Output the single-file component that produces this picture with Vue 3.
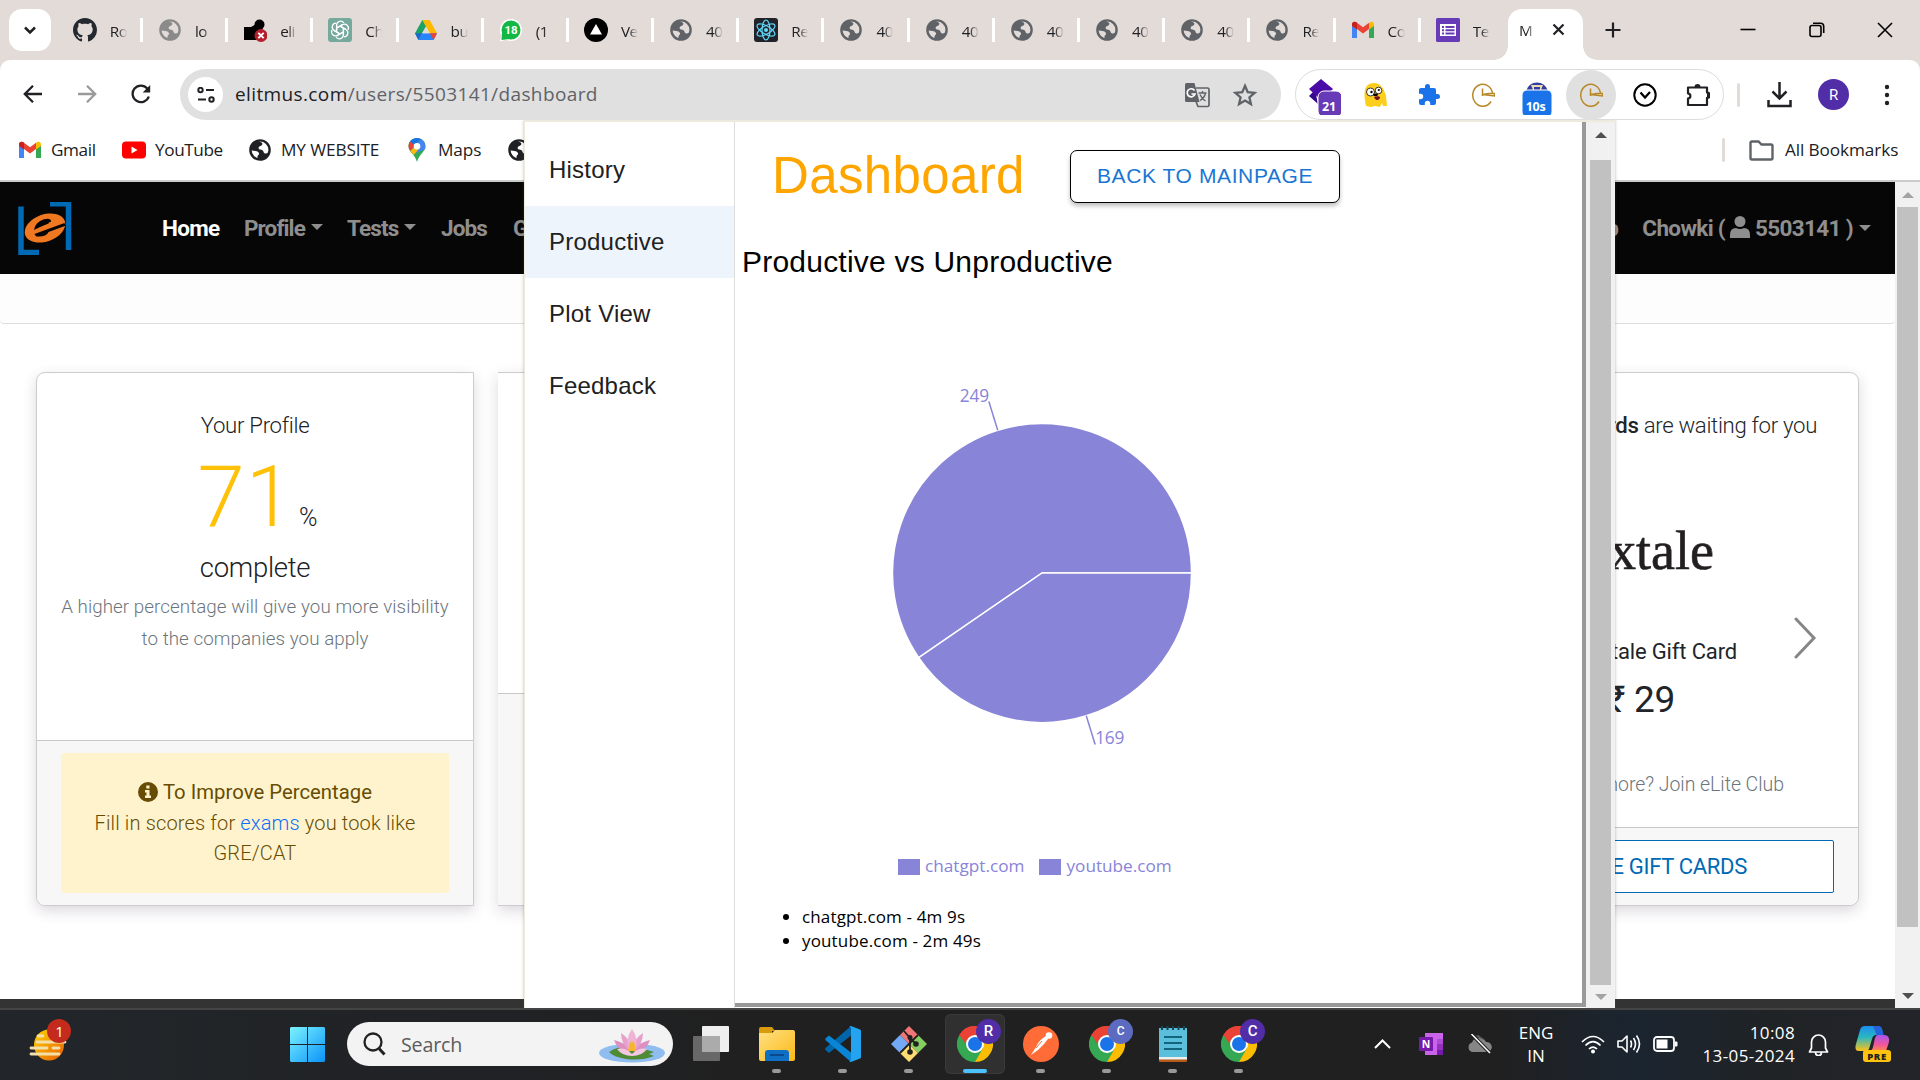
<script setup>
const tabs = [
  { icon: 'github', text: 'Ro' },
  { icon: 'globe', text: 'lo', color: '#8a8a8a' },
  { icon: 'thumb', text: 'eli' },
  { icon: 'gpt', text: 'Ch' },
  { icon: 'drive', text: 'bu' },
  { icon: 'whatsapp', text: '(1' },
  { icon: 'vercel', text: 'Ve' },
  { icon: 'globe', text: '40' },
  { icon: 'react', text: 'Re' },
  { icon: 'globe', text: '40' },
  { icon: 'globe', text: '40' },
  { icon: 'globe', text: '40' },
  { icon: 'globe', text: '40' },
  { icon: 'globe', text: '40' },
  { icon: 'globe', text: 'Re' },
  { icon: 'gmail', text: 'Co' },
  { icon: 'forms', text: 'Te' },
]
const extensions = ['diamond', 'jake', 'puzzle', 'clock', 'timer', 'clock', 'check', 'ext']
const menu = ['History', 'Productive', 'Plot View', 'Feedback']
const apps = [
  { icon: 'explorer' },
  { icon: 'vscode' },
  { icon: 'git' },
  { icon: 'chrome', badge: 'R', color: '#512da8', active: true },
  { icon: 'postman' },
  { icon: 'chrome', badge: 'C', color: '#5c6bc0', small: true },
  { icon: 'notepad' },
  { icon: 'chrome', badge: 'C', color: '#512da8' },
]

const cx = 307, cy = 310, r = 149.5
const sites = [{ name: 'chatgpt.com', value: 249, time: '4m 9s' }, { name: 'youtube.com', value: 169, time: '2m 49s' }]
const total = sites.reduce((sum, s) => sum + s.value, 0)
const at = (angle, radius) => [cx + radius * Math.cos(angle), cy - radius * Math.sin(angle)]
let start = 0
const slices = sites.map((s) => {
  const end = start + (s.value / total) * Math.PI * 2
  const mid = (start + end) / 2
  const slice = {
    value: s.value,
    d: `M${cx} ${cy}L${at(start, r)}A${r} ${r} 0 ${end - start > Math.PI ? 1 : 0} 0 ${at(end, r)}Z`,
    from: at(mid, r),
    to: at(mid, r + 30),
    anchor: Math.cos(mid) < 0 ? 'end' : 'start',
  }
  start = end
  return slice
})
</script>

<template>
  <div class="screen">
    <svg class="sprite" width="0" height="0">
      <defs>
        <linearGradient id="gwin" x1="0" y1="0" x2="1" y2="1"><stop offset="0" stop-color="#7cf3ff" /><stop offset="1" stop-color="#0a93f8" /></linearGradient>
        <linearGradient id="gsun" x1="0" y1="0" x2="1" y2="1"><stop offset="0" stop-color="#ffd500" /><stop offset="1" stop-color="#e85d04" /></linearGradient>
        <linearGradient id="gfold" x1="0" y1="0" x2="1" y2="1"><stop offset="0" stop-color="#ffe184" /><stop offset="1" stop-color="#fbb916" /></linearGradient>
        <linearGradient id="gcop" x1="0" y1="0" x2="0" y2="1"><stop offset="0" stop-color="#1b8df0" /><stop offset=".45" stop-color="#2bb7c0" /><stop offset="1" stop-color="#ffc21a" /></linearGradient>
        <linearGradient id="gcop2" x1="0" y1="0" x2="0" y2="1"><stop offset="0" stop-color="#a855f0" /><stop offset=".6" stop-color="#f0569a" /><stop offset="1" stop-color="#ff8a4c" /></linearGradient>
      </defs>
      <symbol id="globe" viewBox="0 0 24 24"><circle cx="12" cy="12" r="9.6" fill="none" stroke="currentColor" stroke-width="2.4" /><path d="M10 2.5C5 4 2 8 2 12.3l5.5.7c1.6.2 3.6 1.2 3.6 2.8 0 1.2-1.6 1.5-1.6 2.7v3.3C15 22.500 20.500 20 21.800 13.500l-3.500 2c-1.400.4-2.500-.5-2.800-1.700-.3-1.400-1.600-2.200-3.200-2.300-1.700-.2-2.100-1.600-1.300-2.800l2.300-1.300c1.300-.6 1.500-1.600.3-2.800z" fill="currentColor" /></symbol>
      <symbol id="github" viewBox="0 0 16 16"><path fill="#24292f" d="M8 0C3.580 0 0 3.580 0 8c0 3.540 2.290 6.530 5.470 7.590.4.070.55-.17.55-.38 0-.19-.01-.82-.01-1.490-2.010.37-2.530-.49-2.690-.94-.09-.23-.48-.94-.82-1.130-.28-.15-.68-.52-.01-.53.63-.01 1.080.58 1.230.82.72 1.210 1.870.87 2.330.66.07-.52.28-.87.51-1.070-1.780-.2-3.640-.89-3.640-3.950 0-.87.31-1.590.82-2.150-.08-.2-.36-1.020.08-2.120 0 0 .67-.21 2.200.82.64-.18 1.320-.27 2-.27s1.360.09 2 .27c1.530-1.040 2.200-.82 2.200-.82.44 1.100.16 1.920.08 2.120.51.56.82 1.270.82 2.150 0 3.070-1.870 3.750-3.650 3.950.29.25.54.73.54 1.480 0 1.070-.01 1.930-.01 2.200 0 .21.15.46.55.38A8.013 8.013 0 0016 8c0-4.420-3.580-8-8-8z" /></symbol>
      <symbol id="thumb" viewBox="0 0 24 24"><circle cx="16.500" cy="6.500" r="5" /><path d="M1 9h7l7-4 5 5-7 12H1z" /><circle cx="18" cy="17.500" r="6.500" fill="#b3202c" /><path d="M15.300 14.800l5.400 5.400m0-5.400l-5.400 5.400" stroke="#fff" stroke-width="1.900" /></symbol>
      <symbol id="gpt" viewBox="0 0 24 24"><rect width="24" height="24" rx="3" fill="#75a99c" /><g fill="none" stroke="#fff" stroke-width="1.300"><path v-for="n in 6" :key="n" d="M8.600 13.800V7.200a4 4 0 017.300-2.200M8.600 10l5.800-3.300" :transform="`rotate(${n * 60} 12 12)`" /></g></symbol>
      <symbol id="drive" viewBox="0 0 24 24"><path d="M8.300 2h7.400L8 15.300 4.500 22 1 15.300z" fill="#1ea362" /><path d="M8.300 2h7.400L23 15.300h-7.300z" fill="#ffba00" /><path d="M4.500 22L8.200 15.300H23L19.500 22z" fill="#2684fc" /><path d="M1 15.300h7.200L4.500 22z" fill="#1967d2" /><path d="M15.700 15.300H23L19.500 22z" fill="#ea4335" /><path d="M12 8.800l3.700 6.500H8.300z" fill="#e3dbd8" /></symbol>
      <symbol id="whatsapp" viewBox="0 0 24 24"><path d="M12 1a11 11 0 11-5 20.800L1 23.500l1.300-6A11 11 0 0112 1z" fill="#fff" /><circle cx="12" cy="12" r="9.500" fill="#12b843" /><path d="M3 14l-.5 8 8-1z" fill="#12b843" /><text x="12" y="16.300" font-size="11.500" font-weight="700" fill="#fff" text-anchor="middle" font-family="Roboto, sans-serif">18</text></symbol>
      <symbol id="vercel" viewBox="0 0 24 24"><circle cx="12" cy="12" r="12" /><path d="M12 6l6 10.500H6z" fill="#fff" /></symbol>
      <symbol id="react" viewBox="0 0 24 24"><rect width="24" height="24" rx="3" fill="#20232a" /><circle cx="12" cy="12" r="2" fill="#61dafb" /><g fill="none" stroke="#61dafb" stroke-width="1.200"><ellipse v-for="n in 3" :key="n" cx="12" cy="12" rx="10" ry="4" :transform="`rotate(${n * 60 + 30} 12 12)`" /></g></symbol>
      <symbol id="gmail" viewBox="0 0 24 24"><path d="M1 6.500V20h5v-9z" fill="#4285f4" /><path d="M23 6.500V20h-5v-9z" fill="#34a853" /><path d="M1 6.500C1 3.500 4 3 6 4.800l6 4.500 6-4.500V11l-6 4.600L6 11l-5-3z" fill="#ea4335" /><path d="M18 4.800c2-1.800 5-1.300 5 1.700V8l-5 3.500z" fill="#fbbc04" /><path d="M1 6.500C1 3.500 4 3 6 4.800v6.700L1 8z" fill="#c5221f" /></symbol>
      <symbol id="forms" viewBox="0 0 24 24"><rect width="24" height="24" rx="1.500" fill="#673ab7" /><rect x="4" y="6" width="16" height="12" fill="#fff" /><path d="M6 8h2v2H6zm3.500 0h9v2h-9zM6 11.200h2v2H6zm3.500 0h9v2h-9zM6 14.400h2v2H6zm3.500 0h9v2h-9z" fill="#673ab7" /></symbol>
      <symbol id="youtube" viewBox="0 0 24 24"><rect y="3.500" width="24" height="17" rx="4" fill="#f00" /><path d="M9.500 8.500v7l6-3.500z" fill="#fff" /></symbol>
      <symbol id="maps" viewBox="0 0 24 24"><path d="M12 0c5 0 8.500 3.600 8.500 8.300C20.500 14 14 16 12 24 10 16 3.500 14 3.500 8.300 3.500 3.600 7 0 12 0z" fill="#34a853" /><path d="M12 0c-3 0-5.500 1.300-7 3.500l4.500 3.800L16 .9C14.800.3 13.500 0 12 0z" fill="#1a73e8" /><path d="M5 3.500C3 6.500 3 10 5.300 13l9.500-11.500L9.500 7.300z" fill="#ea4335" /><path d="M5.300 13l2.700 3.300 12-5C21 7 19.500 3 16 .9z" fill="#4285f4" /><path d="M5.300 13l3.400 4L18 6l-4.500 4.500-3-2.500z" fill="#fbbc04" /><circle cx="12" cy="8.300" r="3.300" fill="#fff" /></symbol>
      <symbol id="diamond" viewBox="0 0 36 40"><path d="M10 15l-6 6 9 8z" fill="#35088c" /><path d="M16 4l12 10-12 11L4 14z" fill="#4a0aa8" /><rect x="13" y="16" width="24" height="26" rx="6" fill="#673ab7" stroke="#fff" stroke-width="1" /></symbol>
      <symbol id="jake" viewBox="0 0 24 24"><path d="M3 23c-2-9-4-23 8-23 7 0 10 6 12 13l1 10h-4l-1-3-2 4-5-1-4 1z" fill="#fccf1c" /><circle cx="7.500" cy="9" r="4" fill="#fff" stroke="#222" stroke-width=".9" /><circle cx="15.500" cy="7.500" r="3.300" fill="#fff" stroke="#222" stroke-width=".9" /><circle cx="8.500" cy="9" r="1.200" /><circle cx="15.800" cy="7" r="1.100" /><ellipse cx="12.500" cy="11.800" rx="2.500" ry="1.400" /><path d="M11 14c2-1 5-1 6 0 0 3-4 5-6 0z" fill="#712" /></symbol>
      <symbol id="puzzle" viewBox="0 0 24 24"><path d="M20.500 11H19V7a2 2 0 00-2-2h-4V3.500a2.500 2.500 0 00-5 0V5H4a2 2 0 00-2 2v3.800h1.500a2.700 2.700 0 010 5.400H2V20a2 2 0 002 2h3.800v-1.500a2.700 2.700 0 015.400 0V22H17a2 2 0 002-2v-4h1.500a2.500 2.500 0 000-5z" fill="#1a73e8" /></symbol>
      <symbol id="clock" viewBox="0 0 24 24"><path d="M21.500 10A10 11 0 1020 18.500M11.500 5.500V13M11.500 11.500L18 10.500h5.500v2.500z" fill="none" stroke="#b8892b" stroke-width="1.500" /></symbol>
      <symbol id="timer" viewBox="0 0 36 40"><path d="M7 16a11.500 12 0 0122 0z" fill="#303f9f" /><path d="M12 10h12l-2 5h-8z" fill="#ecd9b5" /><path d="M15 12h6v4h-6z" fill="#303f9f" /><rect x="3" y="15" width="30" height="27" rx="5" fill="#1a73e8" stroke="#fff" /></symbol>
      <symbol id="check" viewBox="0 0 24 24"><circle cx="12" cy="12" r="10.700" fill="none" stroke="#000" stroke-width="2" /><path d="M7.500 9.500l4.500 5 5-5.500" fill="none" stroke="#000" stroke-width="2.200" /></symbol>
      <symbol id="ext" viewBox="0 0 24 24"><path d="M2 4.500h19V9.500a2.700 2.700 0 010 5.400V22H2v-6.500c3.200-.5 3.200-4.700 0-5.200z" fill="none" stroke="#202124" stroke-width="2.200" stroke-linejoin="round" /><path d="M8.500 4a3 3 0 016 0zM21 9.200a3 3 0 010 6z" fill="#202124" /></symbol>
      <symbol id="explorer" viewBox="0 0 36 36"><path d="M0 3q0-2 2-2h11l3 4h-3v8H0z" fill="#d99a0b" /><path d="M0 7h13l3-3h18q2 0 2 2v27q0 2-2 2H2q-2 0-2-2z" fill="url(#gfold)" /><path d="M6 35V27q0-3 3-3h18q3 0 3 3v8z" fill="#0f6fc5" /><path d="M11 29h14" stroke="#0a3e78" stroke-width="1.500" /></symbol>
      <symbol id="vscode" viewBox="0 0 36 36"><path d="M26 0v9.500L4 27l-3.500-3q-.8-1 0-2z" fill="#0065a9" /><path d="M26 36v-9.500L4 9.500.7 12.300q-.9 1 0 2z" fill="#0a84d4" /><path d="M26 0l9 3.500q1 .5 1 1.500v26q0 1-1 1.500L26 36q-1 0-1.800-1 1.800.5 1.800-1.500v-31Q26 .5 24.200 1q.8-1 1.800-1z" fill="#24a3f1" /></symbol>
      <symbol id="git" viewBox="0 0 36 36"><path d="M18 0l9 9-9 9-9-9z" fill="#f27474" /><path d="M27 9l9 9-9 9-9-9z" fill="#87ce62" /><path d="M9 9l9 9-9 9-9-9z" fill="#74a9f5" /><path d="M18 18l9 9-9 9-9-9z" fill="#ffdc72" /><path d="M13 5l6 7v14M19 12l6 6M9 27L27 9" stroke="#202020" stroke-width="1.800" fill="none" /><circle cx="19" cy="11.500" r="2.500" fill="#202020" /><circle cx="19" cy="26" r="2.800" fill="#202020" /><circle cx="25" cy="18" r="2.800" fill="#202020" /></symbol>
      <symbol id="chrome" viewBox="0 0 36 36"><path d="M18 18L2.400 9A18 18 0 0133.600 9z" fill="#ea4335" /><path d="M18 18H18L33.600 9A18 18 0 0118 36z" fill="#fbbc04" /><path d="M18 18V18L18 36A18 18 0 012.400 9z" fill="#34a853" /><path d="M18 9h15.600L25.800 22.500z" fill="#fbbc04" /><path d="M10.200 22.500L2.400 9 18 9z" fill="#34a853" /><path d="M2.400 9A18 18 0 0133.600 9H18l-7.800 4.500-2 4z" fill="#ea4335" /><path d="M25.800 22.500L18 36l-2-9z" fill="#34a853" /><circle cx="18" cy="18" r="9" fill="#fff" /><circle cx="18" cy="18" r="7" fill="#1a73e8" /></symbol>
      <symbol id="postman" viewBox="0 0 36 36"><circle cx="18" cy="18" r="18" fill="#ff6c37" /><path d="M23 10q-7 4-10 11l-5 8 7-5 6-6 4-5z" fill="#fff" /><circle cx="26" cy="9.500" r="3.300" fill="#fff" /><path d="M22 18l-5 8m-4-4l6-7" stroke="#ff6c37" stroke-width="1" /></symbol>
      <symbol id="notepad" viewBox="0 0 36 36"><path d="M4 2h28v30H4z" fill="#5bbfdc" /><path d="M4 31h28v3H4z" fill="#eee" /><path d="M4 33.500h28V35q0 1-1 1H5q-1 0-1-1z" fill="#b35a18" /><path d="M9 11h18M9 17h18M9 23h18" stroke="#13657d" stroke-width="2.200" /><path d="M7 0v4m5.500-4v4M18 0v4m5.500-4v4M29 0v4" stroke="#12485c" stroke-width="2" /></symbol>
    </svg>

    <header class="tabstrip">
      <div class="tabsearch"><svg width="14" height="9" viewBox="0 0 14 9"><path d="M2 1.500l5 5 5-5" fill="none" stroke="#202124" stroke-width="2.500" /></svg></div>
      <div v-for="(t, i) in tabs" :key="i" class="tab" :class="{ last: i === tabs.length - 1 }">
        <svg class="fav" :style="{ color: t.color || '#5f6368' }"><use :href="'#' + t.icon" /></svg>
        <span class="tabtext">{{ t.text }}</span>
      </div>
      <div class="tab-active"><span class="tabtext">M</span><svg width="13" height="13" viewBox="0 0 13 13"><path d="M1.500 1.500l10 10m0-10l-10 10" stroke="#202124" stroke-width="2.200" /></svg></div>
      <svg class="newtab" width="16" height="16" viewBox="0 0 16 16"><path d="M8 .5v15M.5 8h15" stroke="#202124" stroke-width="2.200" /></svg>
      <div class="wincontrols">
        <svg width="16" height="16" viewBox="0 0 16 16"><path d="M.5 7.500h15" stroke="#000" stroke-width="1.600" /></svg>
        <svg width="16" height="16" viewBox="0 0 16 16"><g fill="none" stroke="#000" stroke-width="1.600"><rect x="1" y="3.500" width="11" height="11" rx="2" /><path d="M4 1.200h7.500q3.200 0 3.200 3.200V11" /></g></svg>
        <svg width="16" height="16" viewBox="0 0 16 16"><path d="M1 1l14 14M15 1L1 15" stroke="#000" stroke-width="1.600" /></svg>
      </div>
    </header>

    <div class="toolbar">
      <div class="navbtns">
        <svg viewBox="0 0 20 20"><path d="M19 10H2.500M10 1.800L1.800 10l8.200 8.200" fill="none" stroke="#202124" stroke-width="2.300" /></svg>
        <svg viewBox="0 0 20 20"><path d="M1 10h16.500M10 1.800l8.200 8.200-8.200 8.200" fill="none" stroke="#9a9a9a" stroke-width="2.300" /></svg>
        <svg viewBox="0 0 20 20"><path d="M17.800 12.500A8.300 8.300 0 1116.300 4.500L18 7" fill="none" stroke="#202124" stroke-width="2.300" /><path d="M19.200 1v7.500h-7.500z" fill="#202124" /></svg>
      </div>
      <div class="omnibox">
        <div class="siteinfo"><svg width="18" height="16" viewBox="0 0 18 16"><g fill="none" stroke="#202124" stroke-width="2"><circle cx="3.500" cy="3" r="2.200" /><path d="M9 3h8M1 12.500h8" /><circle cx="14.500" cy="12.500" r="2.200" /></g></svg></div>
        <span class="url">elitmus.com<i>/users/5503141/dashboard</i></span>
        <svg class="translate" width="26" height="26" viewBox="0 0 26 26"><path d="M2.500 1h8l5 19h-13Q1 20 1 18.500v-16Q1 1 2.500 1z" fill="#5f6368" /><path d="M12 6h11.500Q25 6 25 7.500v15.500q0 1.500-1.500 1.500H14l-2-5" fill="none" stroke="#5f6368" stroke-width="1.700" /><path d="M14.500 11h8m-4-2v2m3 0q-1 5-5.500 7.500m0-6q2 4.500 5.500 6.500" fill="none" stroke="#5f6368" stroke-width="1.400" /><path d="M10.500 8.500A4 4 0 1011 12H7.500" fill="none" stroke="#fff" stroke-width="1.700" /></svg>
        <svg class="star" width="26" height="26" viewBox="0 0 24 24"><path d="M12 3.500l2.500 5.900 6.400.55-4.850 4.200 1.450 6.250L12 17.100l-5.500 3.300 1.450-6.250L3.100 9.950l6.400-.55z" fill="none" stroke="#5f6368" stroke-width="2.100" /></svg>
      </div>
      <div class="exts">
        <div v-for="(e, i) in extensions" :key="i" class="extcell" :class="{ on: i === 5 }">
          <svg :class="e"><use :href="'#' + e" /></svg>
          <b v-if="e === 'diamond'" class="b21">21</b>
          <b v-if="e === 'timer'" class="b10">10s</b>
        </div>
      </div>
      <div class="toolright">
        <i class="vsep"></i>
        <svg class="dl" width="25" height="27" viewBox="0 0 25 27"><path d="M12.500 1v16M5.500 10.500l7 7 7-7M1.500 19v6h22v-6" fill="none" stroke="#202124" stroke-width="2.500" /></svg>
        <div class="avatar">R</div>
        <svg class="dots" width="6" height="22" viewBox="0 0 6 22"><g fill="#202124"><circle cx="3" cy="3" r="2.200" /><circle cx="3" cy="11" r="2.200" /><circle cx="3" cy="19" r="2.200" /></g></svg>
      </div>
    </div>

    <div class="bookmarks">
      <div class="bm bm1"><svg><use href="#gmail" /></svg><span>Gmail</span></div>
      <div class="bm bm2"><svg><use href="#youtube" /></svg><span>YouTube</span></div>
      <div class="bm bm3"><svg><use href="#globe" /></svg><span>MY WEBSITE</span></div>
      <div class="bm bm4"><svg><use href="#maps" /></svg><span>Maps</span></div>
      <div class="bm"><svg><use href="#globe" /></svg></div>
      <div class="allbm"><i class="vsep"></i><svg width="25" height="21" viewBox="0 0 25 21"><path d="M3 1.500h6.500l3 3H22q1.500 0 1.500 1.500v12q0 1.500-1.500 1.500H3q-1.500 0-1.500-1.500V3Q1.500 1.500 3 1.500z" fill="none" stroke="#5f6368" stroke-width="2.400" /></svg><span>All Bookmarks</span></div>
    </div>

    <main class="viewport">
      <div class="page">
        <nav class="sitenav">
          <svg class="logo" width="54" height="53" viewBox="0 0 54 53"><path d="M3 4.500v46h18M32 1.800h18.500V48" fill="none" stroke="#0069b4" stroke-width="5.500" /><g transform="rotate(-20 27 26)"><ellipse cx="27" cy="26" rx="21" ry="13.500" fill="#f07820" /><path d="M16 24q4-7 13-6.500 7 .5 6 4.500zM15 28h32v3H29q-4 4-13 0z" fill="#060606" /><path d="M19 23h13q1-3-3.500-3.500Q23 19 19 23z" fill="#060606" /></g></svg>
          <b class="home">Home</b>
          <b class="lk w1">Profile<i class="caret"></i></b>
          <b class="lk w2">Tests<i class="caret"></i></b>
          <b class="lk w3">Jobs</b>
          <b class="lk">G</b>
          <b class="lk user"><span class="cut">p</span>Chowki ( <svg width="20" height="22" viewBox="0 0 20 22"><circle cx="10" cy="5.500" r="5.500" fill="#8e8e8e" /><path d="M0 22v-3q0-7 6-7 4 2 8 0 6 0 6 7v3z" fill="#8e8e8e" /></svg> 5503141 )<i class="caret"></i></b>
        </nav>
        <div class="crumb"></div>
        <div class="cards">
          <section class="card first">
            <div class="body">
              <div class="yp">Your Profile</div>
              <div class="pct"><strong>71</strong><span>%</span></div>
              <div class="complete">complete</div>
              <p class="hint">A higher percentage will give you more visibility<br />to the companies you apply</p>
            </div>
            <div class="foot">
              <div class="tip">
                <div class="tiptitle"><svg width="20" height="20" viewBox="0 0 20 20"><circle cx="10" cy="10" r="10" fill="#664d03" /><path d="M8.300 3.500h3.200v3H8.300zM7 8h4.500v5.500H13V16H7v-2.500h1.500v-3H7z" fill="#fff3cd" /></svg>To Improve Percentage</div>
                <div>Fill in scores for <a>exams</a> you took like</div>
                <div>GRE/CAT</div>
              </div>
            </div>
          </section>
          <section class="card mid"><div class="body"></div><div class="foot"></div></section>
          <section class="card gift">
            <div class="body">
              <div class="wait"><b>rds</b> are waiting for you</div>
              <div class="brand">xtale</div>
              <div class="gname">tale Gift Card</div>
              <div class="price">₹ 29</div>
              <div class="more">more? Join eLite Club</div>
              <svg class="next" width="24" height="42" viewBox="0 0 24 42"><path d="M3 2l18 19L3 40" fill="none" stroke="#868686" stroke-width="3" stroke-linecap="round" /></svg>
            </div>
            <div class="foot"><div class="giftbtn">E GIFT CARDS</div></div>
          </section>
        </div>
        <div class="pagefoot"></div>
      </div>
      <div class="scroll pagescroll"><i class="up dim"></i><div class="thumb"></div><i class="down"></i></div>
    </main>

    <footer class="taskbar">
      <svg class="weather" width="46" height="46" viewBox="0 0 46 46"><ellipse cx="20" cy="28" rx="15" ry="15.500" fill="url(#gsun)" /><path d="M9 19h5M8 25h28M2 31h16m6 0h6M2 37h28" stroke="#f4dfa8" stroke-width="2.800" stroke-linecap="round" /><circle cx="30" cy="14" r="12" fill="#c42b1c" /><text x="30.500" y="19.500" font-size="15" fill="#fff" text-anchor="middle">1</text></svg>
      <svg class="start" width="35" height="35" viewBox="0 0 35 35"><path d="M1 0h16v17H0V1zM18 0h16l1 1v16H18zM0 18h17v17H1l-1-1zM18 18h17v16l-1 1H18z" fill="url(#gwin)" /></svg>
      <div class="search">
        <svg width="23" height="24" viewBox="0 0 23 24"><circle cx="10" cy="10" r="8.500" fill="none" stroke="#222" stroke-width="2.300" /><path d="M16 16.500l5.500 6" stroke="#222" stroke-width="3" /></svg>
        <span>Search</span>
        <svg class="lotus" width="66" height="34" viewBox="0 0 66 34"><ellipse cx="33" cy="24" rx="33" ry="9.500" fill="#8fbdf0" /><path d="M10 23q10-7 28-5l17 5-5 2 5 2q-12 5-28 3-13-2-17-7z" fill="#4f8a35" /><g fill="#efb3d6"><path d="M15 11q3 9 13 13l4-3q-7-8-17-10zM51 11q-3 9-13 13l-4-3q7-8 17-10z" fill="#dc8fc0" /><path d="M22 4q0 10 8 18l3-3Q30 9 22 4zM44 4q0 10-8 18l-3-3Q36 9 44 4z" fill="#e6a0cb" /><path d="M33 0q-7 9-3 22h6q4-13-3-22z" /><path d="M18 20q8-2 15 5 7-7 15-5-5 7-15 7t-15-7z" fill="#f3c6e2" /></g><path d="M31 12l-2 10h8l-2-10-1 3-1-4-1 4z" fill="#f6b52b" /></svg>
      </div>
      <svg class="taskview" width="36" height="36" viewBox="0 0 36 36"><rect y="10" width="27" height="25" rx="1" fill="#686868" /><rect x="9" y="0" width="27" height="26" rx="1" fill="#efefef" /><rect x="9" y="10" width="18" height="16" fill="#ababab" /></svg>
      <div v-for="(a, i) in apps" :key="i" class="app" :class="{ active: a.active }">
        <svg width="36" height="36"><use :href="'#' + a.icon" /></svg>
        <b v-if="a.badge" class="badge" :class="{ small: a.small }" :style="{ background: a.color }">{{ a.badge }}</b>
        <i></i>
      </div>
      <div class="tray">
        <svg class="t1" width="17" height="10" viewBox="0 0 17 10"><path d="M1 9l7.500-7.500L16 9" fill="none" stroke="#fff" stroke-width="2" /></svg>
        <svg class="t2" width="24" height="24" viewBox="0 0 24 24"><path d="M6 1h18v22H6z" fill="#ca64ea" /><path d="M18 7h6v5h-6z" fill="#ae4bd5" /><path d="M18 12h6v6h-6z" fill="#9332bf" /><path d="M18 18h6v5h-6z" fill="#7719aa" /><rect y="5" width="14" height="14" rx="1" fill="#7719aa" /><text x="7" y="15.800" font-size="10.500" font-weight="700" fill="#fff" text-anchor="middle">N</text></svg>
        <svg class="t3" width="25" height="20" viewBox="0 0 25 20"><path d="M5 18a5 5 0 010-9.500A7.500 7.500 0 0119 8a5 5 0 011.500 10z" fill="#858585" /><path d="M8 2l3.500-1 7 6" fill="#5b5b5b" /><path d="M4.500 0L23 19" stroke="#202020" stroke-width="3.500" /><path d="M4.500 0L23 19" stroke="#fff" stroke-width="1.500" /></svg>
        <div class="lang">ENG<br />IN</div>
        <svg class="t4" width="24" height="19" viewBox="0 0 24 19"><g fill="none" stroke="#fff" stroke-width="1.700"><path d="M1 7Q12-4 23 7M4.500 10.500Q12 3 19.500 10.500M8 14q4-4 8 0" /></g><circle cx="12" cy="16.500" r="2" fill="#fff" /></svg>
        <svg class="t5" width="25" height="20" viewBox="0 0 25 20"><g fill="none" stroke="#fff" stroke-width="1.600"><path d="M1 7h4l5-5v16l-5-5H1z" stroke-linejoin="round" /><path d="M13.500 6.500q2 3.500 0 7M16.500 4q4 6 0 12M19.500 1.500q6 8.500 0 17" /></g></svg>
        <svg class="t6" width="25" height="16" viewBox="0 0 25 16"><rect x="1" y="1" width="20" height="14" rx="3" fill="none" stroke="#fff" stroke-width="1.800" /><rect x="3.500" y="3.500" width="11" height="9" fill="#fff" /><path d="M22 5.500h1.500q1 0 1 1v3q0 1-1 1H22z" fill="#fff" /></svg>
        <div class="time">10:08<br />13-05-2024</div>
        <svg class="t7" width="21" height="23" viewBox="0 0 21 23"><path d="M3.500 15V9a7 7 0 0114 0v6l2 4h-18zM7.500 19.500a3 3 0 006 0" fill="none" stroke="#fff" stroke-width="1.700" stroke-linejoin="round" /></svg>
        <svg class="t8" width="36" height="36" viewBox="0 0 36 36"><path d="M10 0h13q3 0 4 3l1 6h-7q-3 0-4 4l-3 10q-1 2-4 2H4q-5 0-3-7L5 4q1-4 5-4z" fill="url(#gcop)" /><path d="M18 0h5q3 0 4 3l2 7h-7z" fill="#2563d8" /><path d="M23 9h6q6 0 5 7l-3 9H14q3 0 4-4l2-9q1-3 3-3z" fill="url(#gcop2)" /><rect x="8" y="24" width="28" height="12" rx="3" fill="#ffc20e" /><text x="22" y="33.500" font-size="9.500" letter-spacing=".6" font-weight="800" fill="#222" text-anchor="middle">PRE</text></svg>
      </div>
    </footer>

    <div class="popup">
      <div class="side"><div v-for="m in menu" :key="m" :class="{ sel: m === 'Productive' }">{{ m }}</div></div>
      <div class="content">
        <div class="head"><h1>Dashboard</h1><button>BACK TO MAINPAGE</button></div>
        <h2>Productive vs Unproductive</h2>
        <svg class="chart" width="750" height="560" viewBox="0 0 750 560">
          <path v-for="s in slices" :key="s.value" :d="s.d" fill="#8884d8" stroke="#fff" stroke-width="1.500" />
          <g v-for="s in slices" :key="'l' + s.value">
            <line :x1="s.from[0]" :y1="s.from[1]" :x2="s.to[0]" :y2="s.to[1]" stroke="#8884d8" stroke-width="1.500" />
            <text :x="s.to[0]" :y="s.to[1]" :text-anchor="s.anchor" fill="#8884d8">{{ s.value }}</text>
          </g>
        </svg>
        <div class="legend"><span v-for="s in sites" :key="s.name"><i></i>{{ s.name }}</span></div>
        <ul><li v-for="s in sites" :key="s.name">{{ s.name }} - {{ s.time }}</li></ul>
      </div>
      <div class="scroll popscroll"><i class="up"></i><div class="thumb"></div><i class="down dim"></i></div>
    </div>
  </div>
</template>

<style>
html, body { overflow: hidden; background: #fff; }
</style>

<style scoped>
* { box-sizing: border-box; }
.screen { position: relative; width: 1920px; height: 1080px; overflow: hidden; display: flex; flex-direction: column; font-family: "Open Sans", "Noto Sans", sans-serif; color: #202124; background: #fff; }
.sprite { position: absolute; }
svg { display: block; flex: none; }
.vsep { width: 3px; height: 24px; border-radius: 2px; background: #e3dbd8; flex: none; }

.tabstrip { height: 60px; flex: none; background: #e3dbd8; display: flex; align-items: center; }
.tabsearch { width: 42px; height: 42px; margin: 0 6.800px 0 9px; border-radius: 13px; background: #fff; display: grid; place-items: center; flex: none; }
.tab { width: 85.200px; flex: none; height: 24px; padding-left: 15px; display: flex; align-items: center; border-right: 3px solid #fff; }
.tab.last { border-color: transparent; }
.fav { width: 24px; height: 24px; }
.tabtext { width: 17px; margin-left: 13px; overflow: hidden; white-space: nowrap; font-size: 15.300px; line-height: 24px; letter-spacing: -.5px; mask-image: linear-gradient(90deg, #000 45%, transparent); padding-top: 1px; }
.tab-active { position: relative; width: 75px; height: 51px; margin-left: 2px; align-self: flex-end; background: #fff; border-radius: 14px 14px 0 0; display: flex; align-items: center; flex: none; padding-bottom: 10px; }
.tab-active .tabtext { margin-left: 11px; margin-right: 16px; }
.tab-active::before, .tab-active::after { content: ""; position: absolute; bottom: 0; width: 14px; height: 14px; }
.tab-active::before { left: -14px; background: radial-gradient(circle at 0 0, transparent 13.500px, #fff 14px); }
.tab-active::after { right: -14px; background: radial-gradient(circle at 100% 0, transparent 13.500px, #fff 14px); }
.newtab { margin-left: 22px; }
.wincontrols { margin-left: auto; margin-right: 27px; display: flex; gap: 52.500px; }

.toolbar { height: 60px; flex: none; display: flex; align-items: flex-start; padding-top: 9px; background: #fff; box-shadow: 0 -10px 0 #e3dbd8; border-radius: 10px 10px 0 0; clip-path: inset(0); }
.navbtns { display: flex; gap: 34px; margin: 15px 0 0 23px; width: 157px; }
.navbtns svg { width: 20px; height: 20px; }
.omnibox { width: 1101px; height: 51px; border-radius: 26px; background: #e0e0e0; display: flex; align-items: center; flex: none; }
.siteinfo { width: 35px; height: 35px; border-radius: 50%; background: #fff; margin: 0 12px 0 8px; display: grid; place-items: center; }
.url { font-size: 19px; letter-spacing: .38px; white-space: nowrap; margin-top: -1px; }
.url i { font-style: normal; color: #5f6368; }
.translate { margin-left: auto; }
.star { margin: 0 23px 0 22px; }
.exts { width: 429px; height: 51px; margin-left: 14px; border: 1.500px solid #dcdcdc; border-radius: 26px; display: flex; align-items: center; flex: none; }
.extcell { position: relative; width: 54px; height: 50px; margin-right: -.1px; left: -2px; display: grid; place-items: center; border-radius: 50%; flex: none; }
.extcell.on { background: #e0e0e0; width: 50px; margin: 0 2px; }
.extcell svg { width: 24px; height: 24px; }
.extcell svg.diamond, .extcell svg.timer { width: 36px; height: 40px; }
.extcell:first-child { left: 0; }
.extcell b { position: absolute; color: #fff; font-size: 12.500px; line-height: 14px; font-weight: 700; }
.b21 { left: 26px; top: 30px; letter-spacing: -.2px; }
.b10 { left: 16px; top: 30px; letter-spacing: -.2px; }
.toolright { display: flex; align-items: center; height: 51px; margin-left: 13px; }
.dl { margin: 0 26px 0 27px; }
.avatar { width: 31px; height: 31px; border-radius: 50%; background: #512da8; color: #fff; font: 15px Roboto, sans-serif; display: grid; place-items: center; }
.dots { margin-left: 35px; }

.bookmarks { height: 60px; flex: none; display: flex; align-items: center; padding-left: 18px; font-size: 17.200px; letter-spacing: -.1px; }
.bm { display: flex; align-items: center; gap: 9px; }
.bm span, .allbm span { margin-top: -2px; white-space: nowrap; }
.bm1 span, .bm2 span { letter-spacing: -.4px; }
.bm svg { width: 24px; height: 24px; }
.bm1 { width: 104px; }
.bm2 { width: 126px; }
.bm3 { width: 157px; }
.bm4 { width: 102px; }
.allbm { margin-left: auto; width: 198px; display: flex; align-items: center; white-space: nowrap; }
.allbm svg { margin: 0 11px 0 24px; }

.viewport { height: 828px; flex: none; display: flex; border-top: 2px solid #cacccb; overflow: hidden; }
.page { width: 1895px; display: flex; flex-direction: column; font-family: Roboto, sans-serif; }
.scroll { display: flex; flex-direction: column; align-items: center; background: #f1f1f1; }
.scroll i { width: 0; height: 0; border: 6px solid transparent; }
.scroll i.up { border-top: 0; border-bottom: 6.500px solid #505050; }
.scroll i.down { border-bottom: 0; border-top: 6.500px solid #505050; }
.scroll i.up.dim { border-bottom-color: #a3a3a3; }
.scroll i.down.dim { border-top-color: #a3a3a3; }
.thumb { width: 21px; background: #c1c1c1; }
.pagescroll { width: 25px; padding-top: 10px; }
.pagescroll .thumb { height: 720px; margin: 9px 0 66px; }

.sitenav { height: 92px; flex: none; background: #060606; display: flex; align-items: center; font-size: 22.500px; letter-spacing: -.9px; white-space: nowrap; }
.sitenav b { font-weight: 700; }
.logo { margin: 0 90px 0 18px; }
.home { color: #fff; width: 82px; letter-spacing: -.7px; }
.lk { color: #8e8e8e; }
.w1 { width: 103px; }
.w2 { width: 94px; }
.w3 { width: 72px; }
.caret { display: inline-block; border: 6px solid transparent; border-top-color: #8e8e8e; border-bottom: 0; margin-left: 6px; vertical-align: 6px; }
.user { margin-left: auto; margin-right: 24px; display: flex; align-items: center; white-space: pre; letter-spacing: -.65px; }
.user svg { margin: 0 0 2px; }
.cut { margin-right: 24px; }
.crumb { height: 50px; flex: none; background: #fdfdfd; border-bottom: 1px solid #ddd; border-radius: 0 0 4px 4px; }
.cards { display: flex; margin-top: 48px; padding-left: 36px; flex: none; height: 534px; }
.card { border: 1px solid #ccc; background: #fff; display: flex; flex-direction: column; box-shadow: 0 5px 14px rgba(80, 60, 90, .2); }
.foot { background: #f7f7f7; border-top: 1px solid #c8c8c8; flex: none; }
.first { width: 438px; border-radius: 9px 0 0 9px; margin-right: 24px; overflow: hidden; overflow: clip; }
.first .body { height: 367px; text-align: center; font-weight: 300; padding-top: 37px; }
.yp { font-size: 22.200px; line-height: 30px; letter-spacing: -.3px; }
.pct { display: flex; align-items: baseline; justify-content: center; height: 118px; padding-left: 5px; gap: 5px; font-size: 25px; line-height: 114px; }
.pct strong { font-weight: 300; font-size: 85px; color: #ffc107; letter-spacing: 1.200px; }
.complete { font-size: 27.500px; line-height: 34px; margin-top: -7px; letter-spacing: -.3px; }
.hint { margin: 6px 0 0; color: #6c757d; font-size: 18.800px; letter-spacing: .05px; line-height: 32px; white-space: nowrap; }
.first .foot { flex: 1; padding: 12px 24px; }
.tip { height: 140px; background: #fff3cd; border-radius: 3px; color: #664d03; text-align: center; font-size: 20px; line-height: 30.500px; font-weight: 300; padding-top: 24px; letter-spacing: .15px; }
.tip a { color: #0d6efd; }
.tiptitle { display: flex; justify-content: center; align-items: center; gap: 5px; font-weight: 400; font-size: 20.300px; letter-spacing: .03px; }
.mid { width: 1089px; margin-right: 12px; display: flex; border-left: 0; }
.mid .body { height: 320px; }
.mid .foot { flex: 1; }
.gift { width: 260px; border-radius: 0 9px 9px 0; }
.gift .body { position: relative; height: 454px; text-align: right; white-space: nowrap; color: #212529; }
.gift .foot { flex: 1; padding: 12px 24px 12px 0; border-radius: 0 0 9px; }
.wait { padding: 37px 41px 0 0; font-size: 22.200px; line-height: 30px; font-weight: 300; letter-spacing: -.32px; }
.wait b { font-weight: 500; }
.brand { font-family: "Liberation Serif", serif; font-size: 54px; line-height: 60px; margin: 81px 144px 0 0; color: #231f20; -webkit-text-stroke: .6px #231f20; }
.gname { font-size: 22px; line-height: 28px; margin: 57px 121px 0 0; letter-spacing: -.15px; }
.price { font-size: 37px; line-height: 44px; margin: 12px 183px 0 0; letter-spacing: -.3px; }
.more { font-size: 19.500px; line-height: 26px; font-weight: 300; color: #6c757d; margin: 50px 74px 0 0; letter-spacing: -.05px; }
.next { position: absolute; right: 41px; top: 244px; }
.giftbtn { height: 53px; border: 1.500px solid #0069b4; border-radius: 2px; background: #fff; color: #0069b4; font-size: 22px; line-height: 51px; letter-spacing: -.3px; text-align: right; padding-right: 86px; }
.pagefoot { margin-top: auto; height: 9px; background: #333; }

.taskbar { height: 72px; flex: none; border-top: 2px solid #444; background: linear-gradient(90deg, #22262a 0, #202225 25%, #202020 40%, #202020 78%, #1b2530 85%, #202326 92%, #22242a 100%); display: flex; align-items: center; color: #fff; padding-bottom: 2px; }
.weather { margin: -9px 0 0 29px; }
.start { margin: 0 22px 0 215px; }
.search { width: 326px; height: 44px; border-radius: 22px; background: #f3f3f3; display: flex; align-items: center; padding-left: 16px; flex: none; }
.search span { color: #5c5c5c; font-size: 19.700px; margin-left: 15px; letter-spacing: -.2px; }
.lotus { margin: 4px 8px 0 auto; }
.taskview { margin: 0 15px 0 20px; }
.app { position: relative; width: 60px; height: 60px; margin: 0 3.050px; display: grid; place-items: center; border-radius: 6px; flex: none; }
.taskview + .app { margin-left: 2.600px; }
.app.active { background: #303030; box-shadow: inset 0 0 0 1px #3a3a3a; }
.app i { position: absolute; bottom: 1px; left: 25px; width: 9px; height: 4.500px; border-radius: 3px; background: #999; }
.app.active i { left: 18px; width: 24px; background: #4cc2ff; }
.badge { position: absolute; left: 31px; top: 5px; width: 25px; height: 25px; border-radius: 50%; font: 500 15px/25px Roboto, sans-serif; text-align: center; color: #fff; }
.badge.small { font-size: 12px; }
.tray { margin-left: auto; display: flex; align-items: center; font-size: 17px; line-height: 23px; letter-spacing: 0; }
.t1 { margin-right: 28px; }
.t2 { margin-right: 24px; }
.t3 { margin-right: 26px; }
.lang { width: 36px; text-align: center; margin-right: 27px; }
.t4 { margin-right: 12px; }
.t5 { margin-right: 11px; }
.t6 { margin-right: 15px; }
.time { width: 102px; text-align: right; white-space: nowrap; margin-right: 13px; letter-spacing: .38px; }
.t7 { margin-right: 26px; }
.t8 { margin-right: 29px; }

.popup { position: absolute; left: 524px; top: 120px; width: 1091px; height: 888px; border-top: 2px solid #ecebdd; border-left: 1px solid #ecebdd; background: #fff; display: flex; box-shadow: 0 0 3px rgba(90, 80, 40, .4); clip-path: inset(0 -4px 0 -4px); }
.side { width: 210px; padding-top: 12px; border-right: 1px solid #ddd; font: 24px "Liberation Sans", sans-serif; letter-spacing: .225px; flex: none; color: #212121; }
.side div { height: 72px; line-height: 72px; padding-left: 24px; }
.side .sel { background: #edf4fc; }
.content { width: 851px; border-right: 4px solid #999; border-bottom: 4px solid #999; margin-bottom: 1px; flex: none; }
.head { display: flex; padding: 28px 0 0 37px; font-family: "Liberation Sans", sans-serif; }
.head h1 { margin: -3px 0 0; width: 298px; font-size: 51px; font-weight: 400; line-height: 58px; letter-spacing: .37px; color: #ffa500; }
.head button { width: 270px; height: 53px; border: 1.500px solid #000; border-radius: 7px; background: #fff; color: #1976d2; font: 21px "Liberation Sans", sans-serif; letter-spacing: .6px; white-space: nowrap; padding: 0 0 2px; box-shadow: 0 3px 4px rgba(0, 0, 0, .25); }
h2 { margin: 38px 0 0 7px; font: 400 30px/38px "Liberation Sans", sans-serif; letter-spacing: .22px; color: #000; }
.chart { font-size: 17.300px; margin-top: -18px; letter-spacing: -.2px; }
.legend { display: flex; margin: 31px 0 0 163px; gap: 15px; color: #8884d8; font-size: 17.200px; line-height: 24px; }
.legend span { display: flex; align-items: center; }
.legend i { width: 22px; height: 16px; background: #8884d8; margin: 2px 5px 0 0; }
ul { margin: 27px 0 0; padding-left: 67px; color: #000; font-size: 17px; line-height: 24px; letter-spacing: .15px; }
.popscroll { flex: 1; padding-top: 10px; }
.popscroll .thumb { height: 825px; margin: 22px 0 9px; }
</style>
